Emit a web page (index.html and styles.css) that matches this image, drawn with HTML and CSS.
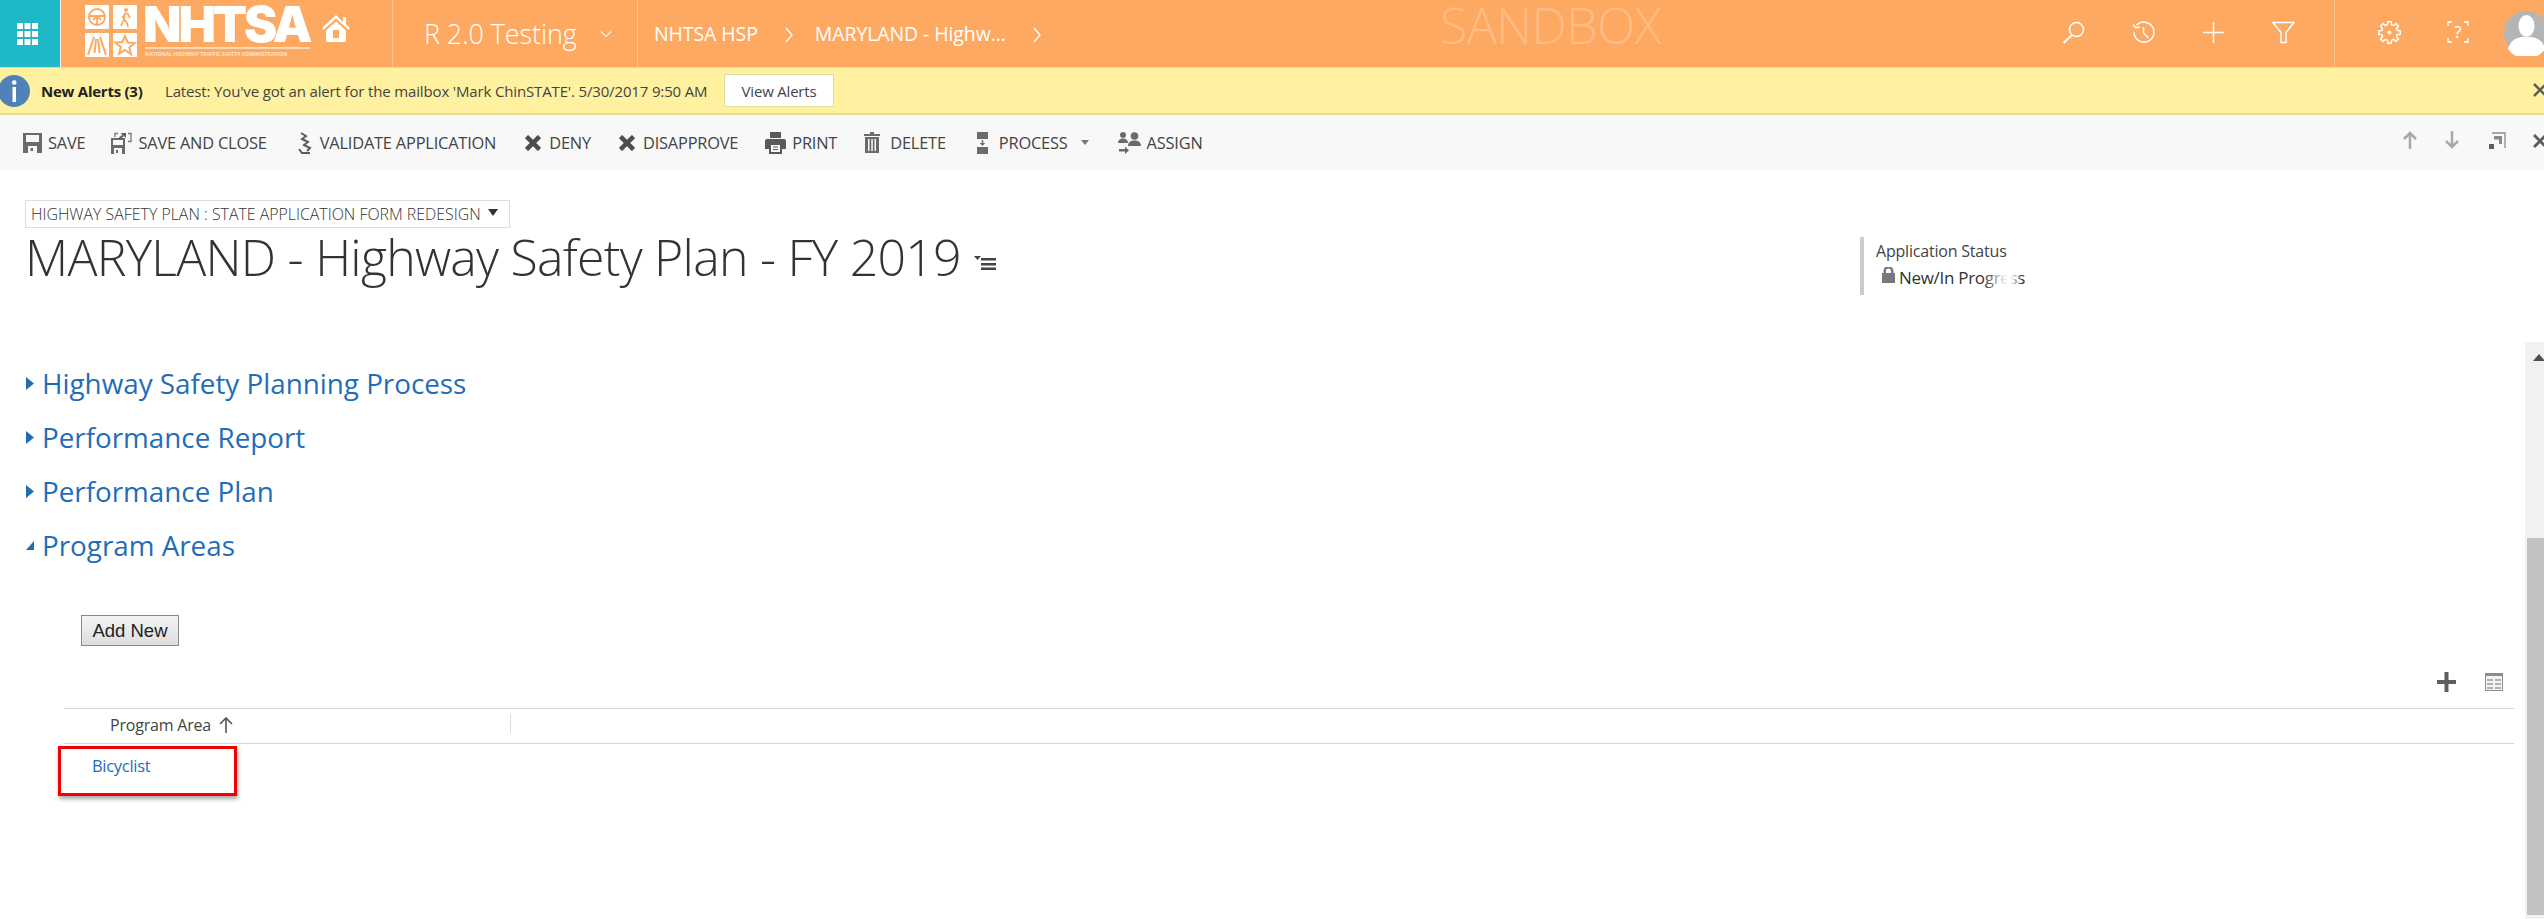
FILE: index.html
```html
<!DOCTYPE html>
<html lang="en">
<head>
<meta charset="utf-8">
<title>MARYLAND - Highway Safety Plan - FY 2019</title>
<link rel="stylesheet" href="styles.css">
</head>
<body>
<header class="topbar">
  <div class="tile">
    <svg class="grid-icon" viewBox="0 0 21 22" aria-hidden="true"><g fill="#fff"><rect x="0" y="0" width="6" height="6"/><rect x="7.500" y="0" width="6" height="6"/><rect x="15" y="0" width="6" height="6"/><rect x="0" y="8" width="6" height="6"/><rect x="7.500" y="8" width="6" height="6"/><rect x="15" y="8" width="6" height="6"/><rect x="0" y="16" width="6" height="6"/><rect x="7.500" y="16" width="6" height="6"/><rect x="15" y="16" width="6" height="6"/></g></svg>
  </div>
  <div class="brand">
    <svg class="logo-tiles" viewBox="0 0 52 52" aria-hidden="true">
      <rect width="24" height="24" rx="1" fill="#fff"/><rect x="28" width="24" height="24" rx="1" fill="#fff"/><rect y="28" width="24" height="24" rx="1" fill="#fff"/><rect x="28" y="28" width="24" height="24" rx="1" fill="#fff"/>
      <circle cx="12" cy="12" r="8" fill="none" stroke="#fea962" stroke-width="2"/><path d="M4.500 11h15M12 11v8M8 15l4-4 4 4" fill="none" stroke="#fea962" stroke-width="1.800"/>
      <circle cx="41" cy="5" r="2" fill="#fea962"/><path d="M40 8l3 1 2 4M40 8l-1 6 3 4 1 4M39 14l-3 7M40 9l-3 4" fill="none" stroke="#fea962" stroke-width="1.800"/>
      <path d="M9 32L3 50M15 32l6 18M11 34l-1.500 14M13 34l1.500 14" fill="none" stroke="#fea962" stroke-width="2"/>
      <path d="M40 31l2.700 6.500 7 .5-5.400 4.500 1.800 6.800L40 45l-6 3.800 1.800-6.800-5.400-4.500 7-.5z" fill="none" stroke="#fea962" stroke-width="2"/>
    </svg>
    <div class="wordmark">
      <span class="wm-big">NHTSA</span>
      <span class="wm-small">NATIONAL HIGHWAY TRAFFIC SAFETY ADMINISTRATION</span>
    </div>
    <svg class="home-icon" viewBox="0 0 28 27" aria-hidden="true"><path fill="#fff" d="M14 0L0 13l1.600 1.800L14 3.400l12.400 11.400L28 13l-4-3.700V2h-3v4.900zM4 15.500V25a2 2 0 0 0 2 2h16a2 2 0 0 0 2-2v-9.500L14 6.500zM11 15h6v8h-6z" fill-rule="evenodd"/></svg>
  </div>
  <div class="org">
    <span class="org-name">R 2.0 Testing</span>
    <svg class="chev-down" viewBox="0 0 14 8" aria-hidden="true"><path d="M1 1l6 6 6-6" fill="none" stroke="#fff" stroke-width="1.300"/></svg>
  </div>
  <nav class="crumbs">
    <span>NHTSA HSP</span>
    <svg class="chev-right" viewBox="0 0 8 16" aria-hidden="true"><path d="M1 1l6 7-6 7" fill="none" stroke="#fff" stroke-width="1.300"/></svg>
    <span>MARYLAND - Highw...</span>
    <svg class="chev-right" viewBox="0 0 8 16" aria-hidden="true"><path d="M1 1l6 7-6 7" fill="none" stroke="#fff" stroke-width="1.300"/></svg>
  </nav>
  <div class="sandbox">SANDBOX</div>
  <div class="top-tools">
    <svg class="top-icon" viewBox="0 0 23 23" aria-hidden="true"><circle cx="14.500" cy="8.500" r="7" fill="none" stroke="#fff" stroke-width="1.500"/><path d="M10 14L1.500 22" stroke="#fff" stroke-width="2" fill="none"/></svg>
    <svg class="top-icon" viewBox="0 0 23 23" aria-hidden="true"><path d="M4.500 4.500A10 10 0 1 1 2 11.500M1 3.500l3 3.500 4-1M11.500 6v6l5 5" fill="none" stroke="#fff" stroke-width="1.500"/></svg>
    <svg class="top-icon" viewBox="0 0 23 23" aria-hidden="true"><path d="M11.500 1v21M1 11.500h21" stroke="#fff" stroke-width="1.500"/></svg>
    <svg class="top-icon" viewBox="0 0 23 23" aria-hidden="true"><path d="M1 1.500h21l-8 10v10h-5v-10z" fill="none" stroke="#fff" stroke-width="1.500"/></svg>
  </div>
  <div class="top-user">
    <svg class="top-icon" viewBox="0 0 23 23" aria-hidden="true">
      <circle cx="11.500" cy="11.500" r="2" fill="#fff"/>
      <g fill="none" stroke="#fff" stroke-width="1.500">
        <path d="M9.560 3.740L9.780.64h3.440l.22 3.100A8 8 0 0 1 15.620 4.640"/>
        <path transform="rotate(45 11.500 11.500)" d="M9.560 3.740L9.780.64h3.440l.22 3.100A8 8 0 0 1 15.620 4.640"/>
        <path transform="rotate(90 11.500 11.500)" d="M9.560 3.740L9.780.64h3.440l.22 3.100A8 8 0 0 1 15.620 4.640"/>
        <path transform="rotate(135 11.500 11.500)" d="M9.560 3.740L9.780.64h3.440l.22 3.100A8 8 0 0 1 15.620 4.640"/>
        <path transform="rotate(180 11.500 11.500)" d="M9.560 3.740L9.780.64h3.440l.22 3.100A8 8 0 0 1 15.620 4.640"/>
        <path transform="rotate(225 11.500 11.500)" d="M9.560 3.740L9.780.64h3.440l.22 3.100A8 8 0 0 1 15.620 4.640"/>
        <path transform="rotate(270 11.500 11.500)" d="M9.560 3.740L9.780.64h3.440l.22 3.100A8 8 0 0 1 15.620 4.640"/>
        <path transform="rotate(315 11.500 11.500)" d="M9.560 3.740L9.780.64h3.440l.22 3.100A8 8 0 0 1 15.620 4.640"/>
      </g>
    </svg>
    <span class="help-icon">
      <svg viewBox="0 0 22 22" aria-hidden="true"><path d="M1 5V1h4M17 1h4v4M1 17v4h4M17 21h4v-4" fill="none" stroke="#fff" stroke-width="1.300"/></svg>
      <span class="help-mark">?</span>
    </span>
    <svg class="avatar" viewBox="0 0 45 45" aria-hidden="true"><circle cx="22.500" cy="22.500" r="22.500" fill="#b5b5b5"/><ellipse cx="22.500" cy="15" rx="8" ry="11" fill="#fff"/><path d="M4 38c2-9 9-11 13-12h11c4 1 11 3 13 12a22.500 22.500 0 0 1-37 0z" fill="#fff"/></svg>
  </div>
</header>

<section class="alertbar">
  <svg class="info-icon" viewBox="0 0 32 32" aria-hidden="true"><circle cx="16" cy="16" r="16" fill="#4f82b6"/><rect x="14.500" y="12" width="3.500" height="15" fill="#fff"/><circle cx="16.200" cy="7.500" r="2.300" fill="#fff"/></svg>
  <strong class="alert-title">New Alerts (3)</strong>
  <span class="alert-text">Latest: You've got an alert for the mailbox 'Mark ChinSTATE'. 5/30/2017 9:50 AM</span>
  <button class="view-alerts" type="button">View Alerts</button>
  <svg class="alert-close" viewBox="0 0 14 14" aria-hidden="true"><path d="M1 1l12 12M13 1L1 13" stroke="#5e5e5e" stroke-width="2.500"/></svg>
</section>

<section class="toolbar">
  <div class="cmd"><svg class="cmd-icon save" viewBox="0 0 19 20" aria-hidden="true"><path fill="#6b6b6b" fill-rule="evenodd" d="M0 0h19v20H0zM3 2v7h13V2zM5 13v7h9v-7zM7.500 15h2.500v3H7.500z"/></svg><span>SAVE</span></div>
  <div class="cmd"><svg class="cmd-icon saveclose" viewBox="0 0 21 22" aria-hidden="true"><path fill="#6b6b6b" fill-rule="evenodd" d="M0 6h14v16H0zM2 8v5h10V8zM3 16v6h8v-6zM5 18h2v3H5z"/><path d="M4 5V1.500h3M17 1.500h3v8h-3" fill="none" stroke="#777" stroke-width="1.300"/><path d="M8 7l4-3.500" stroke="#5d5d5d" stroke-width="2.200"/><path d="M9.500 1H15v5z" fill="#5d5d5d"/></svg><span>SAVE AND CLOSE</span></div>
  <div class="cmd"><svg class="cmd-icon validate" viewBox="0 0 18 22" aria-hidden="true"><path d="M3 1l5 3-4 3 6 3-4 3 6 3-3 3M1 17l3 4h8" fill="none" stroke="#5d5d5d" stroke-width="2"/></svg><span>VALIDATE APPLICATION</span></div>
  <div class="cmd"><svg class="cmd-icon cross deny" viewBox="0 0 16 16" aria-hidden="true"><path d="M1.500 1.500l13 13M14.500 1.500l-13 13" stroke="#4d4d4d" stroke-width="4.500"/></svg><span>DENY</span></div>
  <div class="cmd"><svg class="cmd-icon cross" viewBox="0 0 16 16" aria-hidden="true"><path d="M1.500 1.500l13 13M14.500 1.500l-13 13" stroke="#4d4d4d" stroke-width="4.500"/></svg><span>DISAPPROVE</span></div>
  <div class="cmd"><svg class="cmd-icon print" viewBox="0 0 21 22" aria-hidden="true"><path fill="#5a5a5a" fill-rule="evenodd" d="M5 0h11v6H5zM2 7h17a2 2 0 0 1 2 2v8h-4v5H4v-5H0V9a2 2 0 0 1 2-2zM6 13v7h9v-7z"/><path d="M8 15h5M8 17.500h5" stroke="#5a5a5a"/></svg><span>PRINT</span></div>
  <div class="cmd"><svg class="cmd-icon trash" viewBox="0 0 16 21" aria-hidden="true"><path fill="#6b6b6b" fill-rule="evenodd" d="M6 0h4v2h6v2H0V2h6zM1 5h14v16H1zM4 7v12h1.500V7zM7.300 7v12h1.500V7zM10.500 7v12H12V7z"/></svg><span>DELETE</span></div>
  <div class="cmd"><svg class="cmd-icon process" viewBox="0 0 11 22" aria-hidden="true"><path fill="#6b6b6b" d="M0 0h11v7H0zM0 15h11v7H0zM4.800 8h1.400v3h2L5.500 14 2.800 11h2z"/></svg><span>PROCESS</span><svg class="caret" viewBox="0 0 8 5" aria-hidden="true"><path d="M0 0h8L4 5z" fill="#777"/></svg></div>
  <div class="cmd"><svg class="cmd-icon assign" viewBox="0 0 23 22" aria-hidden="true"><g fill="#6b6b6b"><circle cx="5" cy="3" r="3"/><circle cx="16.500" cy="4" r="3.800"/><path d="M0 11c0-3 2-4.500 5-4.500s5 1.500 5 4.500zM10 14c0-4 3-5.500 6.500-5.500S23 10 23 14zM1 17h6v-2.500l4 4-4 3.500v-2.500H1z"/></g></svg><span>ASSIGN</span></div>
  <div class="cmd-right">
    <svg class="nav-icon" viewBox="0 0 14 18" aria-hidden="true"><path d="M7 18V2M1 8l6-6 6 6" fill="none" stroke="#a9a9a9" stroke-width="2.500"/></svg>
    <svg class="nav-icon" viewBox="0 0 14 18" aria-hidden="true"><path d="M7 0v16M1 10l6 6 6-6" fill="none" stroke="#a9a9a9" stroke-width="2.500"/></svg>
    <svg class="nav-pop" viewBox="0 0 17 17" aria-hidden="true"><path d="M3 1h13v15" fill="none" stroke="#8a8a8a" stroke-width="1.300"/><path d="M5 4h8v8H10V7.500H5z" fill="#8a8a8a"/><rect y="12" width="5" height="5" fill="#5c5c5c"/></svg>
    <svg class="nav-close" viewBox="0 0 14 14" aria-hidden="true"><path d="M1 1l12 12M13 1L1 13" stroke="#5e5e5e" stroke-width="3"/></svg>
  </div>
</section>

<section class="form-head">
  <div class="form-id">
    <div class="form-select"><span>HIGHWAY SAFETY PLAN : STATE APPLICATION FORM REDESIGN</span><svg class="select-caret" viewBox="0 0 10 7" aria-hidden="true"><path d="M0 0h10L5 7z" fill="#333"/></svg></div>
    <div class="title-row">
      <h1>MARYLAND - Highway Safety Plan - FY 2019</h1>
      <svg class="title-menu" viewBox="0 0 22 14" aria-hidden="true"><path fill="#444" d="M0 0h7L3.500 4zM7 2h15v2.500H7zM7 7h15v2.500H7zM7 11.500h15V14H7z"/></svg>
    </div>
  </div>
  <div class="status">
    <div class="status-label">Application Status</div>
    <div class="status-value">
      <svg class="lock" viewBox="0 0 13 16" aria-hidden="true"><path fill="#77777c" fill-rule="evenodd" d="M0 6h1.500V4a5 5 0 0 1 10 0v2H13v10H0zM4 6h5V4a2.500 2.500 0 0 0-5 0z"/></svg>
      <span class="status-text">New/In Progress<span class="status-fade"></span></span>
    </div>
  </div>
</section>

<main class="lower">
  <div class="content">
    <ul class="sections">
      <li class="sec"><svg class="tri" viewBox="0 0 8 13" aria-hidden="true"><path d="M0 0l8 6.500L0 13z"/></svg><span>Highway Safety Planning Process</span></li>
      <li class="sec"><svg class="tri" viewBox="0 0 8 13" aria-hidden="true"><path d="M0 0l8 6.500L0 13z"/></svg><span>Performance Report</span></li>
      <li class="sec"><svg class="tri" viewBox="0 0 8 13" aria-hidden="true"><path d="M0 0l8 6.500L0 13z"/></svg><span>Performance Plan</span></li>
      <li class="sec"><svg class="tri" viewBox="0 0 8 13" aria-hidden="true"><path d="M8 2v9H0z"/></svg><span>Program Areas</span></li>
    </ul>
    <button class="add-new" type="button">Add New</button>
    <div class="grid-tools">
      <svg class="grid-plus" viewBox="0 0 19 20" aria-hidden="true"><path d="M9.500 0v20M0 10h19" stroke="#5e5e5e" stroke-width="4"/></svg>
      <svg class="grid-view" viewBox="0 0 18 18" aria-hidden="true"><rect width="18" height="18" fill="#8d8d8d"/><rect x="1" y="3" width="16" height="14" fill="#f2f2f2"/><path d="M2 7h6M10 7h6M2 11h6M10 11h6M2 15h6M10 15h6" stroke="#9d9d9d" stroke-width="1.500"/></svg>
    </div>
    <div class="grid">
      <div class="grid-head">
        <div class="col-name"><span>Program Area</span><svg class="sort" viewBox="0 0 14 16" aria-hidden="true"><path d="M7 16V2M1 7l6-6 6 6" fill="none" stroke="#555" stroke-width="1.600"/></svg></div>
      </div>
      <div class="grid-row">
        <a class="cell-link">Bicyclist</a>
        <div class="annot"></div>
      </div>
    </div>
  </div>
  <aside class="scrollbar">
    <svg class="scroll-up" viewBox="0 0 12 7" aria-hidden="true"><path d="M6 0l6 7H0z" fill="#505050"/></svg>
    <div class="scroll-thumb"></div>
  </aside>
</main>
</body>
</html>
```
FILE: styles.css
```css
* { box-sizing: border-box; }
html, body { margin: 0; padding: 0; }
body {
  width: 2544px;
  height: 919px;
  overflow: hidden;
  background: #fff;
  font-family: "Open Sans", "Noto Sans", sans-serif;
  color: #333;
  display: flex;
  flex-direction: column;
}

/* top bar */
.topbar {
  height: 67px;
  flex: none;
  display: flex;
  align-items: stretch;
  background: #fea962;
  color: #fff;
  position: relative;
}
.tile {
  width: 61px;
  flex: none;
  background: #1fb8c6;
  display: flex;
  align-items: center;
  justify-content: center;
  border-right: 1px solid #fff;
}
.grid-icon { width: 21px; height: 22px; margin-right: 6px; }
.brand {
  width: 332px;
  flex: none;
  display: flex;
  align-items: flex-start;
  padding: 5px 0 0 24px;
  border-right: 1px solid #ffc28e;
}
.logo-tiles { width: 52px; height: 52px; flex: none; }
.wordmark {
  margin-left: 6px;
  width: 167px;
  display: flex;
  flex-direction: column;
}
.wm-big {
  font-family: "Inter", sans-serif;
  font-weight: 900;
  font-size: 50px;
  line-height: 50px;
  height: 50px;
  margin: -6.500px 0 -1.500px;
  letter-spacing: -3.100px;
}
.wm-small {
  border-top: 2px solid #ffd9b8;
  margin-left: 2px;
  font-size: 5px;
  line-height: 7px;
  font-weight: 700;
  white-space: nowrap;
  letter-spacing: .1px;
  color: #ffe6d2;
  padding-top: 2px;
}
.home-icon { width: 28px; height: 27px; margin: 10px 0 0 12px; flex: none; }
.org {
  width: 245px;
  flex: none;
  display: flex;
  align-items: center;
  padding: 0 0 0 31px;
  border-right: 1px solid #ffc28e;
}
.org-name { font-size: 27px; font-weight: 300; width: 176px; white-space: nowrap; letter-spacing: -.1px; }
.chev-down { width: 12px; height: 8px; }
.crumbs {
  width: 430px;
  flex: none;
  display: flex;
  align-items: center;
  padding-left: 16px;
  font-size: 19.500px;
  white-space: nowrap;
  letter-spacing: -.1px;
}
.crumbs span { flex: none; }
.chev-right { width: 8px; height: 16px; flex: none; margin: 2px 22px 0 27px; }
.sandbox {
  position: absolute;
  left: 1440px;
  top: 0;
  height: 50px;
  line-height: 50px;
  font-size: 50px;
  font-weight: 300;
  letter-spacing: -.6px;
  color: rgba(255, 255, 255, .24);
}
.top-tools {
  margin-left: auto;
  width: 273px;
  flex: none;
  display: flex;
  align-items: center;
  gap: 47px;
  border-right: 1px solid #ffc28e;
}
.top-icon { width: 23px; height: 23px; flex: none; margin-top: -2px; }
.top-user {
  width: 209px;
  flex: none;
  display: flex;
  align-items: center;
  padding-left: 43px;
}
.help-icon {
  position: relative;
  width: 22px;
  height: 22px;
  margin-left: 46px;
  margin-top: -3px;
  flex: none;
  display: block;
}
.help-icon svg { width: 22px; height: 22px; display: block; }
.help-mark {
  position: absolute;
  left: 0;
  right: 0;
  top: 0;
  text-align: center;
  font-size: 17px;
  line-height: 22px;
  color: #fff;
}
.avatar { width: 45px; height: 45px; flex: none; margin-left: 35px; }

/* alert bar */
.alertbar {
  height: 48px;
  flex: none;
  display: flex;
  align-items: center;
  background: #fff1a0;
  border-top: 1px solid #e6dc8c;
  border-bottom: 2px solid #e4dd96;
  position: relative;
  overflow: hidden;
}
.info-icon { width: 32px; height: 32px; flex: none; margin-left: -2px; }
.alert-title { font-size: 15px; font-weight: 700; margin-left: 11px; width: 124px; color: #222; white-space: nowrap; letter-spacing: -.25px; }
.alert-text { font-size: 15px; width: 559px; color: #444; white-space: nowrap; letter-spacing: -.15px; }
.view-alerts {
  width: 110px;
  height: 33px;
  padding: 0;
  background: #fff;
  border: 1px solid #dedd9c;
  font-family: inherit;
  font-size: 15px;
  color: #444;
  letter-spacing: -.2px;
}
.alert-close { width: 14px; height: 14px; margin-left: auto; margin-right: -3px; flex: none; margin-top: -1px; }

/* command bar */
.toolbar {
  height: 55px;
  flex: none;
  display: flex;
  align-items: center;
  gap: 28px;
  background: #f8f8f8;
  padding-left: 23px;
  font-size: 16.400px;
  color: #444;
  white-space: nowrap;
}
.cmd { display: flex; align-items: center; gap: 6px; letter-spacing: -.2px; }
.cmd-icon { flex: none; display: block; }
.save { width: 19px; height: 20px; }
.saveclose { width: 21px; height: 22px; margin-left: -2px; }
.validate { width: 18px; height: 22px; margin: 0 -2px 0 3px; }
.cross { width: 16px; height: 16px; margin-right: 2px; }
.deny { margin-left: 1px; }
.print { width: 21px; height: 22px; margin-left: -1px; }
.trash { width: 16px; height: 21px; margin: 0 4px 0 -1px; }
.process { width: 11px; height: 22px; margin: 0 5px 0 3px; }
.assign { width: 23px; height: 22px; margin-left: 1px; }
.caret { width: 8px; height: 5px; margin-left: 7px; }
.cmd-right {
  margin-left: auto;
  display: flex;
  align-items: center;
  margin-right: -3px;
}
.nav-icon { width: 14px; height: 18px; margin-right: 28px; flex: none; margin-top: -6px; }
.nav-pop { width: 17px; height: 17px; margin: -4px 27px 0 2px; flex: none; }
.nav-close { width: 14px; height: 14px; flex: none; margin-top: -4px; }

/* form header */
.form-head {
  height: 172px;
  flex: none;
  display: grid;
  grid-template-columns: 1860px 1fr;
}
.form-id { padding: 30px 0 0 25px; }
.form-select {
  width: 485px;
  height: 28px;
  display: flex;
  align-items: center;
  gap: 7px;
  border: 1px solid #ddd;
  padding-left: 5px;
  font-size: 15.900px;
  font-weight: 300;
  color: #333;
  white-space: nowrap;
}
.select-caret { width: 10px; height: 7px; flex: none; margin-top: -3px; }
.title-row { display: flex; align-items: flex-end; margin-top: -2px; }
h1 {
  margin: 0;
  font-size: 50px;
  line-height: 62px;
  font-weight: 300;
  color: #333;
  white-space: nowrap;
  letter-spacing: -.75px;
}
.title-menu { width: 22px; height: 14px; margin: 0 0 18px 13px; flex: none; }
.status {
  margin-top: 67px;
  height: 58px;
  border-left: 4px solid #ccc;
  padding: 3px 0 0 12px;
  font-size: 16px;
  color: #444;
}
.status-label { line-height: 22px; letter-spacing: -.2px; }
.status-value { display: flex; align-items: flex-end; padding-left: 6px; height: 27px; }
.lock { width: 13px; height: 16px; flex: none; margin-bottom: 6px; }
.status-text { position: relative; font-size: 17px; line-height: 22px; margin-left: 4px; white-space: nowrap; letter-spacing: -.3px; color: #333; }
.status-fade {
  position: absolute;
  left: 84px;
  top: 0;
  width: 38px;
  height: 24px;
  background: linear-gradient(90deg, rgba(255,255,255,0), #fff 65%, #fff 72%, rgba(255,255,255,.1));
}

/* lower content */
.lower { flex: 1; min-height: 0; display: flex; }
.content { flex: 1; min-width: 0; padding-top: 14px; }
.sections { list-style: none; margin: 0; padding: 0; }
.sec {
  height: 54px;
  display: flex;
  align-items: center;
  padding-left: 26px;
  font-size: 27.800px;
  color: #1f6db8;
  white-space: nowrap;
}
.tri { width: 8px; height: 13px; fill: #1f6db8; margin-right: 8px; flex: none; }
.add-new {
  display: block;
  margin: 43px 0 0 81px;
  width: 98px;
  height: 31px;
  padding: 0;
  border: 1px solid #8a8a8a;
  background: linear-gradient(#f4f4f4, #dedede);
  font-family: "Liberation Sans", Arial, sans-serif;
  font-size: 18.500px;
  color: #222;
}
.grid-tools {
  display: flex;
  align-items: center;
  height: 20px;
  margin-top: 26px;
  padding-left: 2437px;
  gap: 29px;
}
.grid-plus { width: 19px; height: 20px; flex: none; }
.grid-view { width: 18px; height: 18px; flex: none; }
.grid { margin: 16px 11px 0 64px; }
.grid-head {
  height: 36px;
  border-top: 1px solid #d6d6d6;
  border-bottom: 1px solid #d6d6d6;
  padding: 5px 0;
}
.col-name {
  width: 447px;
  height: 19px;
  padding: 2px 0 0 46px;
  display: flex;
  align-items: center;
  gap: 8px;
  border-right: 1px solid #dcdcdc;
  font-size: 16px;
  color: #444;
  letter-spacing: -.2px;
}
.sort { width: 14px; height: 16px; flex: none; }
.grid-row { position: relative; padding: 11px 0 0 29px; }
.cell-link { font-size: 16.500px; line-height: 22px; color: #1f6db8; letter-spacing: -.3px; display: block; margin-left: -1px; }
.annot {
  position: absolute;
  left: -6px;
  top: 2px;
  width: 179px;
  height: 50px;
  border: 3px solid #f40000;
  box-shadow: 1px 3px 4px rgba(0, 0, 0, .35);
}
.scrollbar {
  width: 19px;
  flex: none;
  background: #f1f1f1;
  padding: 12px 0 4px 2px;
  display: flex;
  flex-direction: column;
}
.scroll-up { width: 12px; height: 7px; margin-left: 6px; flex: none; }
.scroll-thumb { margin-top: auto; height: 377px; background: #c2c2c2; flex: none; }
```
